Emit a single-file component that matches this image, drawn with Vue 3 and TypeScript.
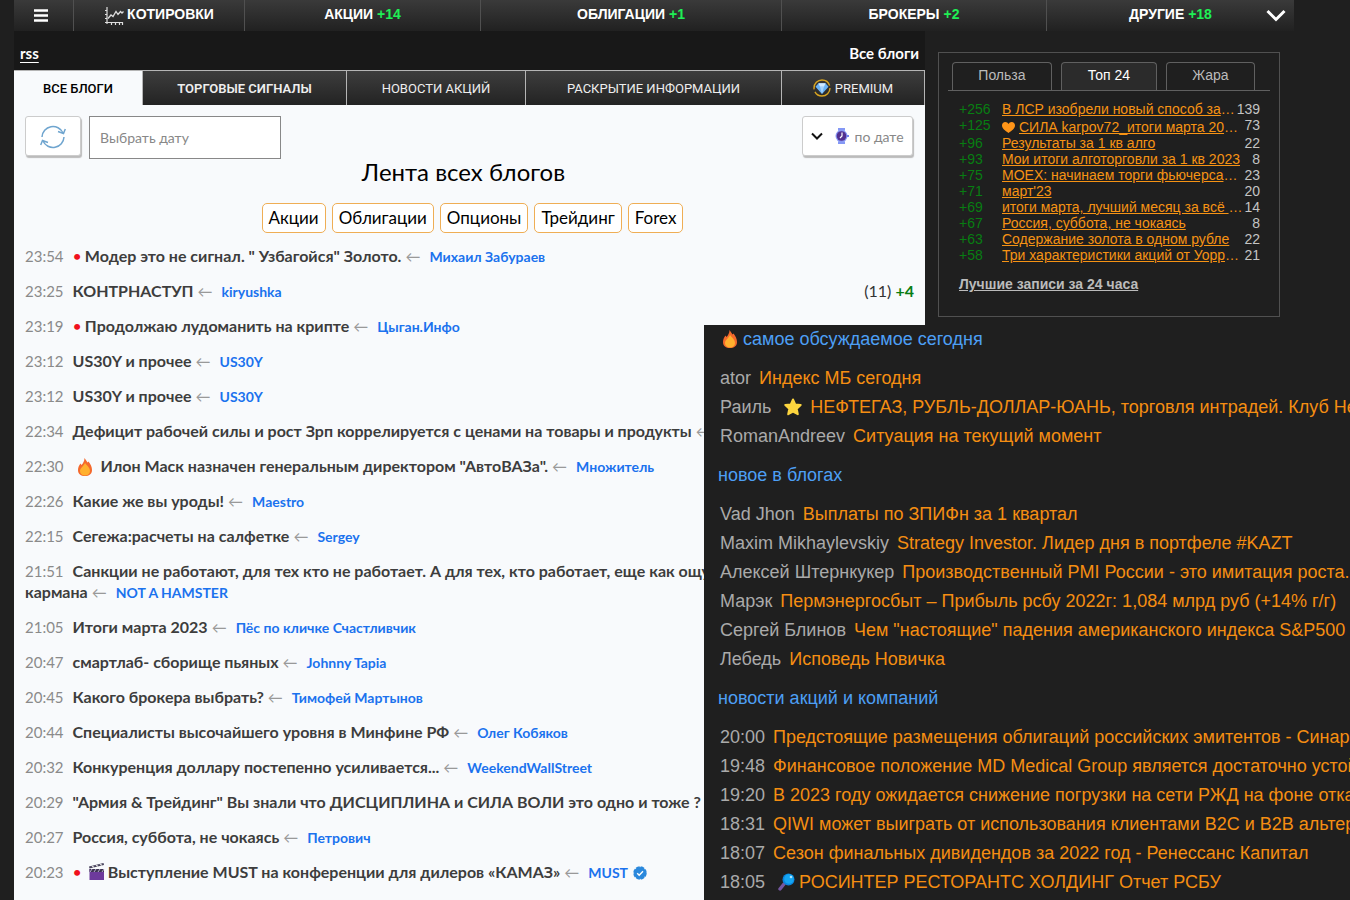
<script setup lang="ts">
import { ref } from 'vue'

interface NavItem { label: string; count: string }
interface Post {
  time: string
  title: string
  rest?: string
  author?: string
  dot?: boolean
  icon?: 'fire' | 'clapper'
  verified?: boolean
  comments?: string
  score?: string
}
interface TopItem { score: string; title: string; comments: number; heart?: boolean; more?: boolean }
interface PanelItem { lead: string; title: string; icon?: 'star' | 'lens' }
interface PanelGroup { title: string; fire?: boolean; items: PanelItem[] }

const nav: NavItem[] = [
  { label: 'АКЦИИ', count: '+14' },
  { label: 'ОБЛИГАЦИИ', count: '+1' },
  { label: 'БРОКЕРЫ', count: '+2' },
  { label: 'ДРУГИЕ', count: '+18' },
]

const tags = ['Акции', 'Облигации', 'Опционы', 'Трейдинг', 'Forex']

const posts: Post[] = [
  { time: '23:54', title: 'Модер это не сигнал. " Узбагойся" Золото.', author: 'Михаил Забураев', dot: true },
  { time: '23:25', title: 'КОНТРНАСТУП', author: 'kiryushka', comments: '(11)', score: '+4' },
  { time: '23:19', title: 'Продолжаю лудоманить на крипте', author: 'Цыган.Инфо', dot: true },
  { time: '23:12', title: 'US30Y и прочее', author: 'US30Y' },
  { time: '23:12', title: 'US30Y и прочее', author: 'US30Y' },
  { time: '22:34', title: 'Дефицит рабочей силы и рост Зрп коррелируется с ценами на товары и продукты' },
  { time: '22:30', title: 'Илон Маск назначен генеральным директором "АвтоВАЗа".', author: 'Множитель', icon: 'fire' },
  { time: '22:26', title: 'Какие же вы уроды!', author: 'Maestro' },
  { time: '22:15', title: 'Сегежа:расчеты на салфетке', author: 'Sergey' },
  { time: '21:51', title: 'Санкции не работают, для тех кто не работает. А для тех, кто работает, еще как ощу', rest: 'кармана', author: 'NOT A HAMSTER' },
  { time: '21:05', title: 'Итоги марта 2023', author: 'Пёс по кличке Счастливчик' },
  { time: '20:47', title: 'смартлаб- сборище пьяных', author: 'Johnny Tapia' },
  { time: '20:45', title: 'Какого брокера выбрать?', author: 'Тимофей Мартынов' },
  { time: '20:44', title: 'Специалисты высочайшего уровня в Минфине РФ', author: 'Олег Кобяков' },
  { time: '20:32', title: 'Конкуренция доллару постепенно усиливается...', author: 'WeekendWallStreet' },
  { time: '20:29', title: '"Армия & Трейдинг" Вы знали что ДИСЦИПЛИНА и СИЛА ВОЛИ это одно и тоже ?' },
  { time: '20:27', title: 'Россия, суббота, не чокаясь', author: 'Петрович' },
  { time: '20:23', title: 'Выступление MUST на конференции для дилеров «КАМАЗ»', author: 'MUST', dot: true, icon: 'clapper', verified: true },
]

const top: TopItem[] = [
  { score: '+256', title: 'В ЛСР изобрели новый способ за', comments: 139, more: true },
  { score: '+125', title: 'СИЛА karpov72_итоги марта 20', comments: 73, heart: true, more: true },
  { score: '+96', title: 'Результаты за 1 кв алго', comments: 22 },
  { score: '+93', title: 'Мои итоги алготорговли за 1 кв 2023', comments: 8 },
  { score: '+75', title: 'MOEX: начинаем торги фьючерса', comments: 23, more: true },
  { score: '+71', title: "март'23", comments: 20 },
  { score: '+69', title: 'итоги марта, лучший месяц за всё ', comments: 14, more: true },
  { score: '+67', title: 'Россия, суббота, не чокаясь', comments: 8 },
  { score: '+63', title: 'Содержание золота в одном рубле', comments: 22 },
  { score: '+58', title: 'Три характеристики акций от Уорр', comments: 21, more: true },
]

const groups: PanelGroup[] = [
  {
    title: 'самое обсуждаемое сегодня',
    fire: true,
    items: [
      { lead: 'ator', title: 'Индекс МБ сегодня' },
      { lead: 'Раиль', title: 'НЕФТЕГАЗ, РУБЛЬ-ДОЛЛАР-ЮАНЬ, торговля интрадей. Клуб Неф', icon: 'star' },
      { lead: 'RomanAndreev', title: 'Ситуация на текущий момент' },
    ],
  },
  {
    title: 'новое в блогах',
    items: [
      { lead: 'Vad Jhon', title: 'Выплаты по ЗПИФн за 1 квартал' },
      { lead: 'Maxim Mikhaylevskiy', title: 'Strategy Investor. Лидер дня в портфеле #KAZT' },
      { lead: 'Алексей Штернкукер', title: 'Производственный PMI России - это имитация роста.' },
      { lead: 'Марэк', title: 'Пермэнергосбыт – Прибыль рсбу 2022г: 1,084 млрд руб (+14% г/г)' },
      { lead: 'Сергей Блинов', title: 'Чем "настоящие" падения американского индекса S&P500 от' },
      { lead: 'Лебедь', title: 'Исповедь Новичка' },
    ],
  },
  {
    title: 'новости акций и компаний',
    items: [
      { lead: '20:00', title: 'Предстоящие размещения облигаций российских эмитентов - Синара' },
      { lead: '19:48', title: 'Финансовое положение MD Medical Group является достаточно устойч' },
      { lead: '19:20', title: 'В 2023 году ожидается снижение погрузки на сети РЖД на фоне отказ' },
      { lead: '18:31', title: 'QIWI может выиграть от использования клиентами B2C и B2B альтерн' },
      { lead: '18:07', title: 'Сезон финальных дивидендов за 2022 год - Ренессанс Капитал' },
      { lead: '18:05', title: 'РОСИНТЕР РЕСТОРАНТС ХОЛДИНГ Отчет РСБУ', icon: 'lens' },
    ],
  },
]

const date = ref('')
const sort = ref('date')
</script>

<template>
  <div class="page">
    <nav class="nav">
      <button class="nav-cell" type="button" aria-label="Меню">
        <svg width="14" height="13" viewBox="0 0 14 13"><path d="M0 1.500h14M0 6.500h14M0 11.500h14" stroke="#fff" stroke-width="2.600" /></svg>
      </button>
      <a class="nav-cell" href="#quotes">
        <svg class="chart" width="20" height="20" viewBox="0 0 20 20" fill="none" stroke="#ddd">
          <path d="M3 1v17M1 16.500h18M1 4.500h2M1 8.500h2M1 12.500h2M7.500 16v3M11.500 16v3M15.500 16v3M18.500 16v3" stroke-width="1.200" />
          <path d="M4 12.500l3-3.500 2 1.500 3-5 2 3 2.500-3L18 7l1.500-1.500" stroke-width="1.300" />
        </svg>
        КОТИРОВКИ
      </a>
      <a v-for="item in nav" :key="item.label" class="nav-cell" href="#section">
        {{ item.label }}&nbsp;<span class="plus">{{ item.count }}</span>
      </a>
      <button class="more" type="button" aria-label="Ещё">
        <svg width="20" height="13" viewBox="0 0 20 13" fill="none"><path d="M1.500 2L10 10.500 18.500 2" stroke="#fff" stroke-width="3" /></svg>
      </button>
    </nav>

    <div class="columns">
      <main class="main">
        <header class="crumbs">
          <a class="rss" href="#rss">rss</a>
          <a href="#all">Все блоги</a>
        </header>
        <nav class="tabs">
          <a class="tab active" href="#all">ВСЕ БЛОГИ</a>
          <a class="tab strong" href="#signals">ТОРГОВЫЕ СИГНАЛЫ</a>
          <a class="tab" href="#news">НОВОСТИ АКЦИЙ</a>
          <a class="tab" href="#disclosure">РАСКРЫТИЕ ИНФОРМАЦИИ</a>
          <a class="tab" href="#premium">
            <svg width="18" height="18" viewBox="0 0 18 18">
              <circle cx="9" cy="9" r="8" fill="none" stroke="#d9a520" stroke-width="1.400" stroke-dasharray="21 2.500 24 2.700" />
              <path d="M5.500 4.200h7l3 3.600L9 15 2.500 7.800z" fill="#6bb3f5" />
              <path d="M5.500 4.200h7l-1.500 3.600H7z" fill="#d2eaff" /><path d="M7 7.800h4L9 15z" fill="#a5d3fd" />
            </svg>
            PREMIUM
          </a>
        </nav>

        <section class="feed">
          <form class="tools" @submit.prevent>
            <button class="box refresh" type="button" aria-label="Обновить">
              <svg width="26" height="24" viewBox="0 0 26 24" fill="none" stroke="#6fa5cf" stroke-width="1.500">
                <path d="M2 12A11 11 0 0 1 23 8M24 12A11 11 0 0 1 3 16" />
                <path d="M18 6.500l5.500 2L25.300 4M8 17.500l-5.500-2L.7 20" />
              </svg>
            </button>
            <input v-model="date" class="date" type="text" placeholder="Выбрать дату" aria-label="Выбрать дату">
            <label class="box sort">
              <svg width="12" height="8" viewBox="0 0 12 8" fill="none"><path d="M1 1.500l5 5 5-5" stroke="#111" stroke-width="2" /></svg>
              <svg width="14" height="16" viewBox="0 0 14 16">
                <path d="M3 0h7v16H3z" fill="#9db2fa" /><path d="M3 1h7M3 15h7" stroke="#6d7ff0" />
                <circle cx="6.500" cy="8" r="6" fill="#8795f3" /><circle cx="6.500" cy="8" r="4.800" fill="#53318f" /><path d="M12 7h2v2h-2z" fill="#7181ef" />
                <path d="M7 4.500V8L5 10" fill="none" stroke="#fff" stroke-width="1.200" />
              </svg>
              <select v-model="sort" aria-label="Сортировка"><option value="date">по дате</option></select>
            </label>
          </form>

          <h1 class="title">Лента всех блогов</h1>
          <div class="tags"><a v-for="tag in tags" :key="tag" class="tag" href="#tag">{{ tag }}</a></div>

          <ul class="posts">
            <li v-for="(post, i) in posts" :key="i" class="post">
              <div>
                <time>{{ post.time }}</time>
                <span v-if="post.dot" class="dot">•</span>
                <svg v-if="post.icon === 'fire'" class="fire" width="14" height="18" viewBox="0 0 14 18">
                  <path d="M6.500 0C8 2 9 3.500 9.500 4.500L10.500 3.500C12.500 6 14 9 14 12c0 4-3 6-7 6s-7-2-7-6c0-2.500 1-4.500 2.500-6.500L3.500 7C5 5.500 6.500 3 6.500 0z" fill="#f4692c" />
                  <path d="M7 5c1.500 2.200 5 4.500 5 8 0 2.800-2 4.500-5 4.500S2 15.800 2 13c0-3 3.500-4.500 5-8z" fill="#ffb02e" />
                </svg>
                <svg v-if="post.icon === 'clapper'" class="clapper" width="16" height="17" viewBox="0 0 16 17">
                  <path d="M0 3.500L14.500 0l.5 2L.5 5.500z" fill="#46405a" /><path d="M3 3l2 1.500M7 2l2 1.500M11 1l2 1.500" stroke="#ddd" stroke-width="1.400" />
                  <path d="M.5 6H15v11H.5z" fill="#6d3a9c" /><path d="M.5 6H15v3H.5z" fill="#3c3350" /><path d="M3 6l-2 3M7 6L5 9M11 6L9 9M15 6l-2 3" stroke="#b9aed0" />
                </svg>
                <a class="headline" href="#post">{{ post.title }}<template v-if="post.rest"><br>{{ post.rest }}</template></a>
                <span class="arrow">←</span>
                <a v-if="post.author" class="author" href="#author">{{ post.author }}</a>
                <svg v-if="post.verified" class="verified" width="14" height="14" viewBox="0 0 14 14">
                  <circle cx="7" cy="7" r="6" fill="#2a88dc" stroke="#2a88dc" stroke-width="1.500" stroke-dasharray="3.700 1" />
                  <path d="M4.200 7.200l2 2L10 5.300" fill="none" stroke="#fff" stroke-width="1.400" />
                </svg>
              </div>
              <div v-if="post.score" class="stats">{{ post.comments }} <b class="score">{{ post.score }}</b></div>
            </li>
          </ul>
        </section>
      </main>

      <aside class="widget">
        <div class="widget-tabs">
          <button type="button">Польза</button>
          <button type="button" class="on">Топ 24</button>
          <button type="button">Жара</button>
        </div>
        <ul class="top">
          <li v-for="item in top" :key="item.score" :class="{ tall: item.heart }">
            <span class="rate">{{ item.score }}</span>
            <span class="top-title"><a href="#post"><svg v-if="item.heart" width="13" height="11" viewBox="0 0 13 11"><path d="M6.500 11C3 8.500 0 6.500 0 3.500 0 1.500 1.500 0 3.300 0 4.700 0 5.900.8 6.500 2 7.100.8 8.300 0 9.700 0 11.500 0 13 1.500 13 3.500c0 3-3 5-6.500 7.500z" fill="#ff9518" /></svg>{{ item.title }}</a>{{ item.more ? '…' : '' }}</span>
            <span class="num">{{ item.comments }}</span>
          </li>
        </ul>
        <a class="best" href="#best">Лучшие записи за 24 часа</a>
      </aside>
    </div>

    <section class="panel">
      <template v-for="group in groups" :key="group.title">
        <h2 class="panel-title">
          <svg v-if="group.fire" class="panel-fire" width="14" height="18" viewBox="0 0 14 18">
            <path d="M6.500 0C8 2 9 3.500 9.500 4.500L10.500 3.500C12.500 6 14 9 14 12c0 4-3 6-7 6s-7-2-7-6c0-2.500 1-4.500 2.500-6.500L3.500 7C5 5.500 6.500 3 6.500 0z" fill="#f4692c" />
            <path d="M7 5c1.500 2.200 5 4.500 5 8 0 2.800-2 4.500-5 4.500S2 15.800 2 13c0-3 3.500-4.500 5-8z" fill="#ffb02e" />
          </svg>{{ group.title }}
        </h2>
        <ul class="panel-list">
          <li v-for="item in group.items" :key="item.title">
            <span class="lead">{{ item.lead }}</span>
            <svg v-if="item.icon === 'star'" class="star" width="18" height="18" viewBox="0 0 18 18"><path d="M9 1.500l2.200 4.900 5.500.6-4 3.800 1.100 5.400L9 13.600l-4.800 2.600 1.100-5.400-4-3.800 5.500-.6z" fill="#fcd53f" stroke="#fcd53f" stroke-width="2" stroke-linejoin="round" /></svg>
            <svg v-if="item.icon === 'lens'" class="lens" width="17" height="18" viewBox="0 0 17 18"><path d="M6 11l-4 5" stroke="#7457a0" stroke-width="3.400" stroke-linecap="round" /><circle cx="10.500" cy="6.500" r="6" fill="#0a84dc" /><circle cx="11" cy="6" r="4.800" fill="#14a5f2" /><circle cx="13" cy="4" r="1.300" fill="#a9e2ff" /></svg>
            <a href="#post">{{ item.title }}</a>
          </li>
        </ul>
      </template>
    </section>
  </div>
</template>

<style>
body { margin: 0; background: #1f1f1f; }
</style>

<style scoped>
* { box-sizing: border-box; }
.page { position: relative; height: 100vh; overflow: hidden; background: #1f1f1f; font-family: Lato, "Open Sans", sans-serif; }
a { text-decoration: none; color: inherit; }
button { font: inherit; color: inherit; cursor: pointer; }
ul { list-style: none; margin: 0; padding: 0; }

.nav {
  position: relative; display: grid; grid-template-columns: 60fr 171fr 236fr 301fr 265fr 247fr;
  height: 31px; margin: 0 56px 0 14px; background: linear-gradient(#3a3a3a, #212121);
  font: bold 14px "Liberation Sans", Arial, sans-serif; color: #fff;
}
.nav-cell { display: flex; align-items: center; justify-content: center; padding: 0 0 3px; border: 0; border-right: 1px solid #505050; background: none; white-space: nowrap; }
button.nav-cell { padding: 0 5px 0 0; }
.nav-cell:last-of-type { border-right: 0; }
.chart { margin: 3px 3px 0 0; }
.plus { color: #1fef55; }
.more { position: absolute; right: 8px; top: 9px; border: 0; padding: 0; background: none; line-height: 0; }

.columns { display: grid; grid-template-columns: minmax(0, 911fr) minmax(0, 342fr); gap: 13px; margin: 0 70px 0 14px; align-items: start; }
.crumbs { display: flex; justify-content: space-between; align-items: center; height: 39px; padding: 5px 6px 0; background: #181818; color: #fff; font-size: 15px; font-weight: 700; }
.rss { text-decoration: underline; text-underline-offset: 3px; }
.tabs { display: grid; grid-template-columns: 129fr 204fr 179fr 256fr 143fr; height: 35px; border-top: 1px solid #b5b5b5; background: linear-gradient(#3d3d3d, #232323); font: 13px Roboto, sans-serif; color: #eee; }
.tab { display: flex; align-items: center; justify-content: center; gap: 4px; border-right: 1px solid #b5b5b5; white-space: nowrap; }
.tab.active { background: #f8fafc; color: #000; font-weight: 500; }
.tab.strong { font-weight: 600; }
.feed { background: #f8fafc; min-height: 795px; padding: 11px 11px 0; }
.tools { display: flex; gap: 8px; height: 42px; align-items: flex-start; }
.box { display: flex; align-items: center; justify-content: center; height: 40px; border: 1px solid #ccc; border-radius: 3px; background: #fff; box-shadow: 1px 2px 1px #bbb; }
.refresh { width: 56px; padding: 2px 0 0; }
.date { width: 192px; height: 43px; padding: 0 10px; border: 1px solid #888; background: #fff; font: 14px Lato, sans-serif; color: #333; }
.date::placeholder { color: #888; }
.sort { width: 111px; margin: 0 1px 0 auto; gap: 6px; }
.sort svg:first-child { margin-right: 6px; }
.sort select { appearance: none; border: 0; padding: 0; background: none; font: 14px Lato, sans-serif; color: #888; }
.title { margin: 0; padding-right: 12px; text-align: center; font-size: 24px; font-weight: 400; line-height: 28px; color: #000; }
.tags { display: flex; justify-content: center; gap: 6px; margin-top: 17px; padding-left: 6px; }
.tag { height: 30px; padding: 0 6px; border: 1px solid #efae55; border-radius: 5px; background: #fff; font-size: 17px; line-height: 28px; color: #000; }

.posts { margin-top: 5px; }
.post { display: flex; justify-content: space-between; padding: 7px 0; font-size: 16px; line-height: 21px; white-space: nowrap; }
.post time, .dot, .arrow, .author { line-height: 16px; }
time { margin-right: 9px; font-size: 15px; color: #8a8a8a; }
.dot { margin-right: 3px; color: #f0101c; }
.fire, .clapper, .verified { margin-top: -4px; margin-bottom: -2px; }
.fire { margin-left: 5px; margin-right: 9px; vertical-align: -2px; }
.clapper { margin-left: 4px; margin-right: 3px; vertical-align: 0; }
.headline { font-weight: 700; color: #3d3d3d; }
.arrow { margin: 0 9px 0 4px; font-size: 15px; font-weight: 400; color: #999; }
.author { font-size: 14px; font-weight: 700; color: #1b72ee; }
.verified { margin-left: 5px; vertical-align: 0; }
.stats { color: #333; }
.score { color: #087d12; }

.widget { height: 265px; margin-top: 21px; padding: 9px 9px 0; border: 1px solid #505050; background: #1f1f1f; font: 14px/16px "Liberation Sans", Arial, sans-serif; color: #bbb; }
.widget-tabs { display: flex; gap: 9px; padding: 0 15px 0 4px; border-bottom: 1px solid #606060; }
.widget-tabs button { flex: 100 1 0; height: 28px; padding: 0 0 4px; border: 1px solid #606060; border-bottom: 0; border-radius: 4px 4px 0 0; background: none; }
.widget-tabs button.on { flex-grow: 96; margin-bottom: -1px; background: #2b2b2b; color: #fff; }
.widget-tabs button:last-child { flex-grow: 89; }
.top { margin: 10px 10px 0 11px; }
.top li { display: grid; grid-template-columns: 43px minmax(0, 1fr) auto; height: 16px; }
.top li.tall { height: 18px; }
.rate { color: #087d12; }
.top-title { white-space: nowrap; color: #f69314; }
.top-title a { text-decoration: underline; white-space: pre; }
.tall .top-title { padding-top: 2px; }
.top-title svg { margin-right: 4px; vertical-align: -1px; }
.num { color: #c4c4c4; }
.best { display: inline-block; margin: 13px 11px; font-weight: bold; text-decoration: underline; }

.panel { position: absolute; top: 325px; right: 0; bottom: 0; left: 704px; overflow: hidden; padding: 0 0 0 16px; background: #1f1f1f; font: 18px/29px "Liberation Sans", Arial, sans-serif; color: #aaa; white-space: nowrap; }
.panel-title { margin: 10px 0 10px -2px; font: inherit; color: #4d9ff5; }
.panel-title:first-child { margin-top: 0; }
.panel-fire { margin: 0 6px 0 5px; vertical-align: -3px; }
.lead { margin-right: 8px; }
.panel-list a { color: #f58e12; }
.star { margin: 0 8px 0 5px; vertical-align: -3px; }
.lens { margin: 0 4px 0 5px; vertical-align: -3px; }
</style>
